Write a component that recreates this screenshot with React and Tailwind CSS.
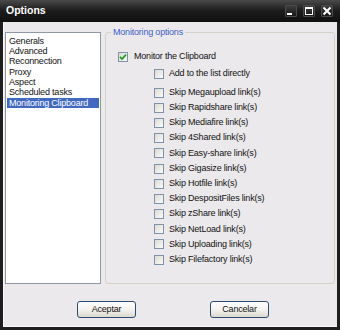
import React from "react";

const pages = [
  "Generals",
  "Advanced",
  "Reconnection",
  "Proxy",
  "Aspect",
  "Scheduled tasks",
  "Monitoring Clipboard",
];

const skips = [
  "Megaupload",
  "Rapidshare",
  "Mediafire",
  "4Shared",
  "Easy-share",
  "Gigasize",
  "Hotfile",
  "DespositFiles",
  "zShare",
  "NetLoad",
  "Uploading",
  "Filefactory",
];

function CheckBox({ checked }) {
  return (
    <span className="flex h-[10px] w-[10px] shrink-0 items-center justify-center border border-[#7d93ab] bg-linear-to-br from-[#dcdad2] to-[#fbfbf9]">
      {checked && (
        <svg width="8" height="8" viewBox="0 0 8 8">
          <path d="M1 3.8 L3 6 L7 1.6" fill="none" stroke="#1f9e1f" strokeWidth="1.8" />
        </svg>
      )}
    </span>
  );
}

function TitleButton({ children }) {
  return (
    <div className="flex h-[12px] w-[12px] items-center justify-center rounded-[1px] border border-[#4a4a4a] bg-linear-to-b from-[#3c3c3c] to-[#1a1a1a]">
      {children}
    </div>
  );
}

function Button({ label }) {
  return (
    <button className="h-[17px] w-[59px] rounded-[3px] border border-[#2d4d70] bg-linear-to-b from-[#ffffff] via-[#f4f3ef] to-[#dcd9d0] text-[9px] tracking-[-0.2px] text-[#111]">
      {label}
    </button>
  );
}

export default function App() {
  return (
    <div className="flex h-[330px] w-[340px] flex-col bg-[#1e1e1e] font-['Liberation_Sans',Arial,sans-serif]">
      {/* title bar */}
      <div className="flex h-[22px] items-center bg-linear-to-b from-[#4a4a4a] via-[#1c1c1c] to-[#101010] pl-[6px] pr-[7px]">
        <span className="text-[10.5px] font-bold text-white">Options</span>
        <div className="ml-auto flex gap-[6px]">
          <TitleButton>
            <span className="mt-[6px] mr-[3px] h-[2px] w-[5px] bg-white" />
          </TitleButton>
          <TitleButton>
            <span className="h-[8px] w-[8px] border border-t-2 border-white" />
          </TitleButton>
          <TitleButton>
            <svg width="10" height="10" viewBox="0 0 10 10">
              <path d="M1.5 1.5 L8.5 8.5 M8.5 1.5 L1.5 8.5" stroke="#fff" strokeWidth="2" />
            </svg>
          </TitleButton>
        </div>
      </div>

      {/* client area */}
      <div className="mx-[3px] mb-[3px] flex flex-1 flex-col border-b border-l border-[#fafafa] bg-[#ece9ec] pt-[10px] text-[9px] tracking-[-0.2px] text-[#111]">
        <div className="flex h-[252px] items-start gap-[4px] pl-[1px]">
          <div className="h-[252px] w-[96px] border border-[#8d98a4] bg-white pt-[2.5px]">
            {pages.map((p) => (
              <div
                key={p}
                className={
                  p === "Monitoring Clipboard"
                    ? "mx-[1px] h-[10.4px] bg-[#4169c0] pl-[2px] leading-[10.4px] text-white"
                    : "mx-[1px] h-[10.4px] pl-[2px] leading-[10.4px]"
                }
              >
                {p}
              </div>
            ))}
          </div>

          <div className="relative h-[252px] w-[230px] rounded-[3px] border border-[#d3d1c8] pt-[16px] pl-[12px]">
            <span className="absolute top-[-6px] left-[5px] bg-[#ece9ec] px-[2px] leading-[11px] text-[#3d5fc4]">
              Monitoring options
            </span>

            <div className="flex h-[15.2px] items-center gap-[6px]">
              <CheckBox checked />
              <span>Monitor the Clipboard</span>
            </div>

            <div className="mt-[1.8px] flex h-[15.2px] items-center gap-[5px] pl-[36px]">
              <CheckBox />
              <span>Add to the list directly</span>
            </div>

            <div className="mt-[3.8px] flex flex-col pl-[36px]">
              {skips.map((s) => (
                <div key={s} className="flex h-[15.2px] items-center gap-[5px]">
                  <CheckBox />
                  <span>Skip {s} link(s)</span>
                </div>
              ))}
            </div>
          </div>
        </div>

        <div className="mt-[17px] flex gap-[74px] pl-[73px]">
          <Button label="Aceptar" />
          <Button label="Cancelar" />
        </div>
      </div>
    </div>
  );
}
